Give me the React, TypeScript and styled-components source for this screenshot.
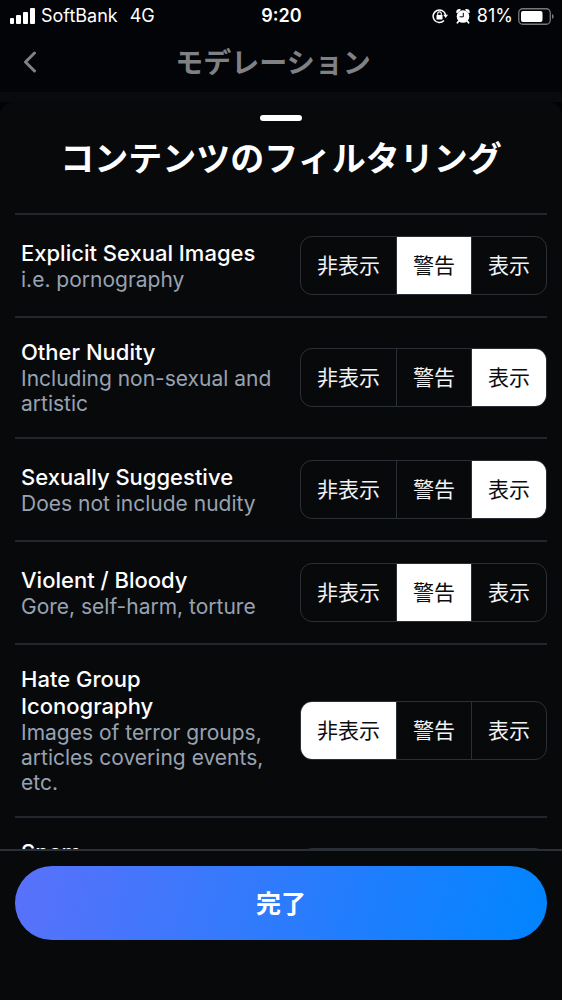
import React, { useState } from "react";
import styled, { createGlobalStyle } from "styled-components";

const GlobalStyle = createGlobalStyle`
  * { box-sizing: border-box; }
  body {
    margin: 0;
    background: #030407;
    color: #fff;
    font-family: Inter, "Noto Sans CJK JP", sans-serif;
  }
  button { font-family: inherit; cursor: pointer; }
  h1, h2, h3, p { margin: 0; }
`;

const Screen = styled.div`
  display: flex;
  flex-direction: column;
  height: 100vh;
  overflow: hidden;
`;

const StatusBar = styled.div`
  display: grid;
  grid-template-columns: 1fr auto 1fr;
  align-items: center;
  height: 32px;
  padding: 0 8px 0 9px;
  font-size: 18px;
  line-height: 24px;
`;

const StatusGroup = styled.div<{ $end?: boolean }>`
  display: flex;
  align-items: center;
  justify-content: ${(p) => (p.$end ? "flex-end" : "flex-start")};
  gap: ${(p) => (p.$end ? "5px" : "6px")};
`;

const StatusIcons = styled.span`
  display: flex;
  gap: 8px;
  margin-right: 2px;
`;

const Network = styled.span`
  margin-left: 6px;
`;

const Clock = styled.time`
  font-weight: 600;
`;

const Header = styled.header`
  display: grid;
  grid-template-columns: 44px 1fr 60px;
  align-items: center;
  height: 60px;
  padding: 0 8px;
`;

const BackButton = styled.button`
  display: flex;
  align-items: center;
  justify-content: center;
  height: 44px;
  padding: 0;
  border: 0;
  background: none;
  color: #808184;
`;

const HeaderTitle = styled.h1`
  padding-top: 2px;
  font-size: 28px;
  line-height: 40px;
  font-weight: 700;
  text-align: center;
  color: #808184;
`;

const Backdrop = styled.div`
  display: flex;
  flex-direction: column;
  flex: 1;
  min-height: 0;
  padding-top: 10px;
  background: linear-gradient(#090a0e 10px, #020305 10px);
`;

const Sheet = styled.section`
  display: flex;
  flex-direction: column;
  flex: 1;
  min-height: 0;
  padding-top: 13px;
  border-radius: 14px 14px 0 0;
  background: #08090b;
`;

const Handle = styled.div`
  align-self: center;
  width: 42px;
  height: 6px;
  border-radius: 3px;
  background: #fff;
`;

const SheetTitle = styled.h2`
  margin: 14px 0 30px;
  font-size: 34px;
  line-height: 48px;
  font-weight: 700;
  text-align: center;
`;

const List = styled.div`
  flex: 1;
  min-height: 0;
  padding: 0 15px;
  overflow-y: auto;
  scrollbar-width: none;
`;

const Row = styled.div`
  display: flex;
  align-items: center;
  gap: 24px;
  padding: 21px 0 21px 6px;
  border-top: 2px solid #23272d;
`;

const RowText = styled.div`
  flex: 1;
  min-width: 0;
`;

const RowTitle = styled.h3`
  font-size: 22px;
  line-height: 27px;
  font-weight: 500;
`;

const RowDescription = styled.p`
  font-size: 21px;
  line-height: 25px;
  color: #98a2b1;
`;

const Segments = styled.div`
  display: flex;
  flex: none;
  height: 59px;
  border: 1px solid #2b3036;
  border-radius: 12px;
  overflow: hidden;
`;

const Segment = styled.button<{ $selected: boolean }>`
  padding: 0 16px;
  border: 0;
  background: ${(p) => (p.$selected ? "#fff" : "transparent")};
  color: ${(p) => (p.$selected ? "#0b0d10" : "#f1f3f5")};
  font-size: 21px;
  line-height: 30px;

  & + & {
    border-left: 1px solid #2b3036;
  }
`;

const Footer = styled.footer`
  padding: 15px 15px 60px;
  border-top: 2px solid #2b3036;
  background: #08090b;
`;

const DoneButton = styled.button`
  display: block;
  width: 100%;
  height: 74px;
  padding: 2px 0 0;
  border: 0;
  border-radius: 37px;
  background: linear-gradient(105deg, #5a71fa 0%, #0085ff 100%);
  color: #fff;
  font-size: 25px;
  line-height: 36px;
  font-weight: 700;
`;

const options = ["非表示", "警告", "表示"] as const;
type Option = (typeof options)[number];

interface Filter {
  title: string;
  description: string;
  value: Option;
}

const initialFilters: Filter[] = [
  { title: "Explicit Sexual Images", description: "i.e. pornography", value: "警告" },
  { title: "Other Nudity", description: "Including non-sexual and artistic", value: "表示" },
  { title: "Sexually Suggestive", description: "Does not include nudity", value: "表示" },
  { title: "Violent / Bloody", description: "Gore, self-harm, torture", value: "警告" },
  {
    title: "Hate Group Iconography",
    description: "Images of terror groups, articles covering events, etc.",
    value: "非表示",
  },
  { title: "Spam", description: "Excessive unwanted interactions", value: "警告" },
];

const SignalIcon = () => (
  <svg width="26" height="16" viewBox="0 0 26 16" fill="#fff" aria-hidden="true">
    <rect x="1" y="10" width="4" height="6" rx="1" />
    <rect x="7" y="7" width="5" height="9" rx="1" />
    <rect x="14" y="4" width="5" height="12" rx="1" />
    <rect x="21" y="0" width="5" height="16" rx="1" />
  </svg>
);

const RotationLockIcon = () => (
  <svg width="16" height="16" viewBox="0 0 16 16" fill="none" aria-hidden="true">
    <path d="M12 12.600A6.300 6.300 0 1 1 13.600 7" stroke="#fff" strokeWidth="1.500" />
    <path d="M11.200 6.800h4.800l-2.300 3.200z" fill="#fff" />
    <rect x="4.500" y="7" width="6" height="4.600" rx=".6" fill="#fff" />
    <path d="M5.700 7V5.700a1.800 1.800 0 0 1 3.600 0V7" stroke="#fff" strokeWidth="1.100" />
  </svg>
);

const AlarmIcon = () => (
  <svg width="14" height="16" viewBox="0 0 14 16" fill="none" aria-hidden="true">
    <circle cx="7" cy="8.500" r="6.300" fill="#fff" />
    <path d="M.3 4.800C-.2 2 2.200.2 4.800 1.200L4.600 2.200 1.200 5.200zM13.700 4.800C14.200 2 11.800.2 9.200 1.200L9.400 2.200 12.800 5.200z" fill="#fff" />
    <path d="M2.800 13 1.400 14.800M11.200 13 12.600 14.800" stroke="#fff" strokeWidth="1.800" strokeLinecap="round" />
    <path d="M7.300 4.800v4H3.600" stroke="#030407" strokeWidth="1" />
  </svg>
);

const BatteryIcon = () => (
  <svg width="36" height="17" viewBox="0 0 36 17" fill="none" aria-hidden="true">
    <rect x=".75" y=".75" width="31.5" height="15.5" rx="4" stroke="#77787b" strokeWidth="1.3" />
    <rect x="3" y="3" width="21.5" height="11" rx="2" fill="#fff" />
    <path d="M34 6v5c1-.4 1.7-1.3 1.7-2.5S35 6.400 34 6z" fill="#77787b" />
  </svg>
);

const BackIcon = () => (
  <svg width="14" height="22" viewBox="0 0 14 22" fill="none" aria-hidden="true">
    <path d="M11.500 2 2.500 11l9 9" stroke="currentColor" strokeWidth="3" strokeLinecap="round" strokeLinejoin="round" />
  </svg>
);

interface FilterRowProps {
  filter: Filter;
  onChange: (value: Option) => void;
}

const FilterRow = ({ filter, onChange }: FilterRowProps) => (
  <Row>
    <RowText>
      <RowTitle>{filter.title}</RowTitle>
      <RowDescription>{filter.description}</RowDescription>
    </RowText>
    <Segments role="group" aria-label={filter.title}>
      {options.map((option) => (
        <Segment
          key={option}
          type="button"
          $selected={option === filter.value}
          aria-pressed={option === filter.value}
          onClick={() => onChange(option)}
        >
          {option}
        </Segment>
      ))}
    </Segments>
  </Row>
);

export default function App() {
  const [filters, setFilters] = useState(initialFilters);

  const update = (title: string, value: Option) =>
    setFilters((all) => all.map((f) => (f.title === title ? { ...f, value } : f)));

  return (
    <>
      <GlobalStyle />
      <Screen lang="ja">
        <StatusBar>
          <StatusGroup>
            <SignalIcon />
            <span>SoftBank</span>
            <Network>4G</Network>
          </StatusGroup>
          <Clock>9:20</Clock>
          <StatusGroup $end>
            <StatusIcons>
              <RotationLockIcon />
              <AlarmIcon />
            </StatusIcons>
            <span>81%</span>
            <BatteryIcon />
          </StatusGroup>
        </StatusBar>
        <Header>
          <BackButton type="button" aria-label="戻る">
            <BackIcon />
          </BackButton>
          <HeaderTitle>モデレーション</HeaderTitle>
        </Header>
        <Backdrop>
          <Sheet>
            <Handle />
            <SheetTitle>コンテンツのフィルタリング</SheetTitle>
            <List>
              {filters.map((filter) => (
                <FilterRow
                  key={filter.title}
                  filter={filter}
                  onChange={(value) => update(filter.title, value)}
                />
              ))}
            </List>
            <Footer>
              <DoneButton type="button">完了</DoneButton>
            </Footer>
          </Sheet>
        </Backdrop>
      </Screen>
    </>
  );
}
